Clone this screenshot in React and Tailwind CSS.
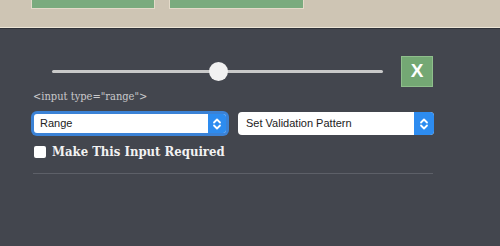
import React from "react";

function Chevrons() {
  return (
    <svg width="10" height="14" viewBox="0 0 10 14" fill="none" stroke="white" strokeWidth="1.8" strokeLinecap="round" strokeLinejoin="round">
      <path d="M2 5.5 L5 2.5 L8 5.5" />
      <path d="M2 8.5 L5 11.5 L8 8.5" />
    </svg>
  );
}

export default function App() {
  return (
    <div className="w-[500px] h-[246px] bg-[#43464e] overflow-hidden flex flex-col">
      <div className="h-[27px] bg-[#cec5b4] flex gap-[14px] pl-[31px] items-start">
        <div className="w-[124px] h-[9px] bg-[#7aab7e] border border-t-0 border-[#e3dac9]" />
        <div className="w-[135px] h-[9px] bg-[#7aab7e] border border-t-0 border-[#e3dac9]" />
      </div>
      <div className="h-[1px] bg-[#ece5d6]" />
      <div className="h-[1px] bg-[#2f3238]" />
      <div className="flex flex-col px-[33px] pt-[27px]">
        <div className="flex items-center h-[30px]">
          <div className="ml-[19px] w-[331px] relative flex items-center">
            <div className="w-full h-[3px] bg-[#c9c9c9] rounded-full" />
            <div className="absolute left-[157px] w-[19px] h-[19px] rounded-full bg-[#f1f1f1]" />
          </div>
          <div className="ml-[18px] w-[32px] h-[31px] bg-[#74a874] border border-[#8fbf8c] flex items-center justify-center text-white text-[19px] font-bold" style={{ fontFamily: "'Liberation Sans', Arial, sans-serif" }}>
            X
          </div>
        </div>
        <div className="mt-[3px] text-[11px] leading-[16px] text-[#c9c9cb] font-stretch-condensed" style={{ fontFamily: "'DejaVu Serif', serif" }}>
          &lt;input type="range"&gt;
        </div>
        <div className="mt-[6px] flex items-center gap-[9px]" style={{ fontFamily: "'Liberation Sans', Arial, sans-serif" }}>
          <div className="w-[198px] h-[25px] rounded-[6px] bg-[#3b82d6] p-[3px] -ml-[2px]">
            <div className="w-full h-full bg-white rounded-[3px] flex items-center overflow-hidden">
              <span className="flex-1 pl-[6px] text-[11px] text-[#222]">Range</span>
              <div className="w-[18px] h-full bg-[#2d8cf0] flex items-center justify-center">
                <Chevrons />
              </div>
            </div>
          </div>
          <div className="w-[196px] h-[23px] rounded-[4px] bg-white flex items-center overflow-hidden">
            <span className="flex-1 pl-[8px] text-[11px] text-[#222]">Set Validation Pattern</span>
            <div className="w-[20px] h-full bg-[#2d8cf0] flex items-center justify-center">
              <Chevrons />
            </div>
          </div>
        </div>
        <div className="mt-[7px] flex items-center gap-[6px]">
          <div className="w-[12px] h-[12px] bg-white rounded-[2px] ml-[1px]" />
          <span className="text-[13px] font-bold text-[#f2f2f2] leading-[18px] font-stretch-condensed" style={{ fontFamily: "'DejaVu Serif', serif" }}>
            Make This Input Required
          </span>
        </div>
        <div className="mt-[12px] w-[400px] h-[1px] bg-[#5d6068]" />
      </div>
    </div>
  );
}
